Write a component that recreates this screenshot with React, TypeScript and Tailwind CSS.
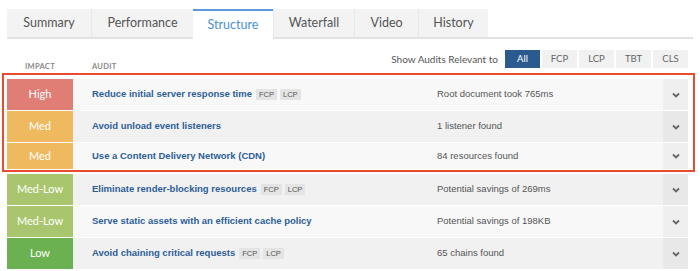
import React from "react";

type Row = { impact: string; color: string; title: string; badges: boolean; desc: string; bg: string; chev: string };

const rows: Row[] = [
  { impact: "High", color: "bg-[#e07d74]", title: "Reduce initial server response time", badges: true, desc: "Root document took 765ms", bg: "bg-[#f8f8f8]", chev: "bg-[#efefef]" },
  { impact: "Med", color: "bg-[#efb95f]", title: "Avoid unload event listeners", badges: false, desc: "1 listener found", bg: "bg-[#f1f1f1]", chev: "bg-[#e8e8e8]" },
  { impact: "Med", color: "bg-[#efb95f]", title: "Use a Content Delivery Network (CDN)", badges: false, desc: "84 resources found", bg: "bg-[#f8f8f8]", chev: "bg-[#efefef]" },
  { impact: "Med-Low", color: "bg-[#a9c66e]", title: "Eliminate render-blocking resources", badges: true, desc: "Potential savings of 269ms", bg: "bg-[#f1f1f1]", chev: "bg-[#e8e8e8]" },
  { impact: "Med-Low", color: "bg-[#a9c66e]", title: "Serve static assets with an efficient cache policy", badges: false, desc: "Potential savings of 198KB", bg: "bg-[#f8f8f8]", chev: "bg-[#efefef]" },
  { impact: "Low", color: "bg-[#6bb152]", title: "Avoid chaining critical requests", badges: true, desc: "65 chains found", bg: "bg-[#f1f1f1]", chev: "bg-[#e8e8e8]" },
];

function Chevron() {
  return (
    <svg width="8" height="6" viewBox="0 0 8 6">
      <path d="M1 1.5 L4 4.5 L7 1.5" fill="none" stroke="#666" strokeWidth="1.8" />
    </svg>
  );
}

function AuditRow({ r, h }: { r: Row; h: string }) {
  return (
    <div className={`flex ${h} ${r.bg}`}>
      <div className={`w-[66px] ${r.color} flex items-center justify-center text-white text-[11px] font-['Lato',sans-serif]`}>{r.impact}</div>
      <div className="flex-1 flex items-center pl-[19px] font-['Liberation_Sans',Arial,sans-serif]">
        <span className="text-[#2d5e98] font-bold text-[9.5px]">{r.title}</span>
        {r.badges && (
          <span className="flex gap-[3px] ml-[4px]">
            <span className="bg-[#e4e4e4] text-[#555] text-[7.5px] h-[11px] leading-[11px] px-[3px]">FCP</span>
            <span className="bg-[#e4e4e4] text-[#555] text-[7.5px] h-[11px] leading-[11px] px-[3px]">LCP</span>
          </span>
        )}
      </div>
      <div className="w-[226px] flex items-center text-[#555] text-[9.5px] font-['Liberation_Sans',Arial,sans-serif]">{r.desc}</div>
      <div className={`w-[25px] ${r.chev} flex items-center justify-center`}>
        <Chevron />
      </div>
    </div>
  );
}

const tabs = [
  { name: "Summary", w: "w-[84px]" },
  { name: "Performance", w: "w-[102px]" },
  { name: "Structure", w: "w-[80px]" },
  { name: "Waterfall", w: "w-[81px]" },
  { name: "Video", w: "w-[64px]" },
  { name: "History", w: "w-[70px]" },
];

export default function App() {
  return (
    <div className="w-[700px] h-[271px] bg-white overflow-hidden font-['Lato',sans-serif]">
      <div className="pt-[9px] px-[7px]">
        <div className="flex border-b-2 border-[#e2e2e2] h-[30px]">
          {tabs.map((t, i) =>
            t.name === "Structure" ? (
              <div key={t.name} className={`${t.w} h-[30px] -mb-[2px] bg-white border-t-2 border-[#5b9bd9] flex items-center justify-center text-[12.5px] text-[#4a90d2]`}>
                {t.name}
              </div>
            ) : (
              <div key={t.name} className={`${t.w} h-[28px] bg-[#f3f3f3] ${i > 0 ? "border-l border-[#e8e8e8]" : ""} flex items-center justify-center text-[12.5px] text-[#555]`}>
                {t.name}
              </div>
            )
          )}
        </div>
      </div>
      <div className="flex items-center justify-end pr-[12px] mt-[11px] h-[18px] gap-[2px]">
        <span className="text-[10px] text-[#555] mr-[5px]">Show Audits Relevant to</span>
        <span className="w-[35px] h-[18px] bg-[#2b5a8e] text-white text-[9.5px] flex items-center justify-center">All</span>
        {["FCP", "LCP", "TBT", "CLS"].map((f) => (
          <span key={f} className="w-[35px] h-[18px] bg-[#f1f1f1] text-[#666] text-[9.5px] flex items-center justify-center">{f}</span>
        ))}
      </div>
      <div className="flex h-[8px] items-center mt-[-5px] text-[7.5px] font-bold text-[#888] tracking-[0.3px] px-[7px]">
        <span className="w-[66px] text-center">IMPACT</span>
        <span className="pl-[19px]">AUDIT</span>
      </div>
      <div className="px-[2px] mt-[2px]">
        <div className="border-2 border-[#ea4a30] pt-[4px] pb-[1px] pl-[3px] pr-[5px] flex flex-col gap-[1px] mr-[3px]">
          <AuditRow r={rows[0]} h="h-[31px]" />
          <AuditRow r={rows[1]} h="h-[31px]" />
          <AuditRow r={rows[2]} h="h-[26px]" />
        </div>
      </div>
      <div className="px-[7px] pr-[12px] mt-[2px] flex flex-col gap-[1px]">
        <AuditRow r={rows[3]} h="h-[31px]" />
        <AuditRow r={rows[4]} h="h-[31px]" />
        <AuditRow r={rows[5]} h="h-[31px]" />
      </div>
    </div>
  );
}
